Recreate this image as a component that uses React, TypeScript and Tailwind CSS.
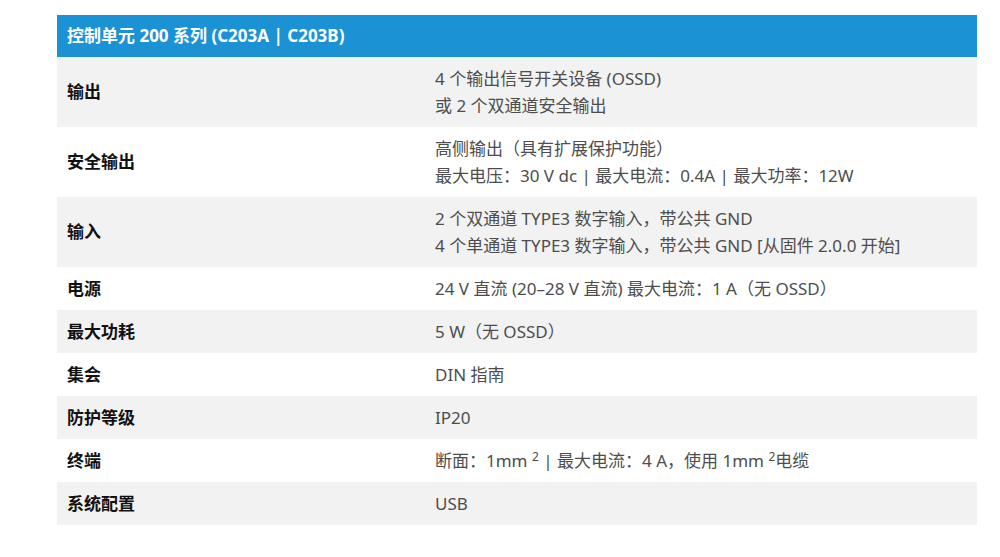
import React from "react"

type Row = { label: string; lines: React.ReactNode[] }

const rows: Row[] = [
  { label: "输出", lines: ["4 个输出信号开关设备 (OSSD)", "或 2 个双通道安全输出"] },
  {
    label: "安全输出",
    lines: ["高侧输出（具有扩展保护功能）", "最大电压：30 V dc | 最大电流：0.4A | 最大功率：12W"],
  },
  {
    label: "输入",
    lines: ["2 个双通道 TYPE3 数字输入，带公共 GND", "4 个单通道 TYPE3 数字输入，带公共 GND [从固件 2.0.0 开始]"],
  },
  { label: "电源", lines: ["24 V 直流 (20–28 V 直流) 最大电流：1 A（无 OSSD）"] },
  { label: "最大功耗", lines: ["5 W（无 OSSD）"] },
  { label: "集会", lines: ["DIN 指南"] },
  { label: "防护等级", lines: ["IP20"] },
  {
    label: "终端",
    lines: [
      <>
        断面：1mm <sup className="text-[12px]">2</sup> | 最大电流：4 A，使用 1mm <sup className="text-[12px]">2</sup>电缆
      </>,
    ],
  },
  { label: "系统配置", lines: ["USB"] },
]

export default function App() {
  return (
    <div
      className="min-h-[557px] bg-white pt-[15px] pl-[57px]"
      style={{ fontFamily: '"Noto Sans", "Noto Sans CJK SC", sans-serif' }}
    >
      <div className="w-[920px]">
        <div className="h-[42px] bg-[#1b92d4] px-[10px] flex items-center text-white text-[17px] font-bold">
          控制单元 200 系列 (C203A | C203B)
        </div>
        {rows.map((r, i) => (
          <div
            key={r.label}
            className={`grid grid-cols-[368px_1fr] ${i % 2 === 0 ? "bg-[#f2f2f2]" : "bg-white"}`}
          >
            <div className="px-[10px] py-[8px] flex items-center text-[17px] font-bold text-[#111]">
              {r.label}
            </div>
            <div className="px-[10px] py-[8px] text-[17px] leading-[27px] text-[#4d4d4d]">
              {r.lines.map((l, j) => (
                <div key={j}>{l}</div>
              ))}
            </div>
          </div>
        ))}
      </div>
    </div>
  )
}
